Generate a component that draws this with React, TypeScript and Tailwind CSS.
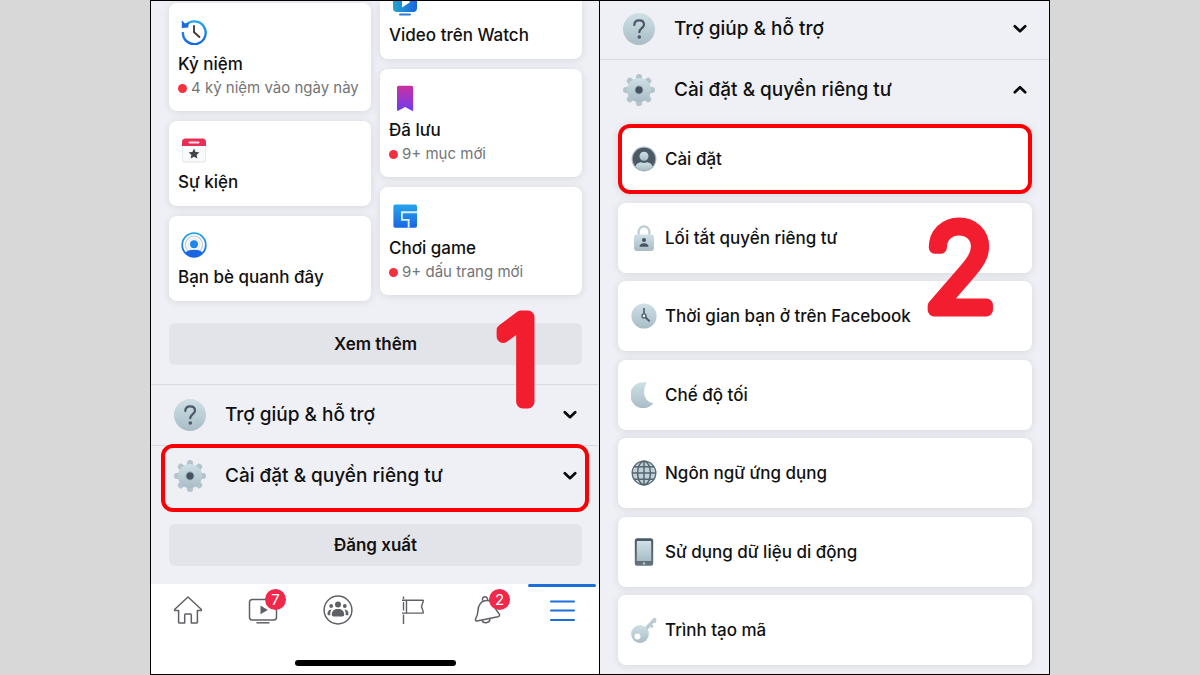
import type { ReactNode } from 'react';

type Shortcut = {
  title: string;
  note?: string;
  icon: ReactNode;
};

function Gradients() {
  return (
    <svg className="absolute h-0 w-0" aria-hidden="true">
      <defs>
        <linearGradient id="steel" x1="0" y1="0" x2="0" y2="1">
          <stop offset="0" stopColor="#cfe0e6" />
          <stop offset="1" stopColor="#a9bcc6" />
        </linearGradient>
        <linearGradient id="slate" x1="0" y1="0" x2="0" y2="1">
          <stop offset="0" stopColor="#4a5864" />
          <stop offset="1" stopColor="#66757f" />
        </linearGradient>
        <linearGradient id="sky" x1="0" y1="0" x2="0" y2="1">
          <stop offset="0" stopColor="#27a5ee" />
          <stop offset="1" stopColor="#1a66e0" />
        </linearGradient>
        <linearGradient id="saved" x1="0" y1="0" x2="0" y2="1">
          <stop offset="0" stopColor="#cb2f9e" />
          <stop offset="1" stopColor="#6e3df0" />
        </linearGradient>
        <linearGradient id="watch" x1="0" y1="0" x2="1" y2="0">
          <stop offset="0" stopColor="#22a7c9" />
          <stop offset="1" stopColor="#1b63e2" />
        </linearGradient>
      </defs>
    </svg>
  );
}

const MemoryIcon = () => (
  <svg viewBox="0 0 26 26" className="size-[26px]" fill="none" aria-hidden="true">
    <path d="M4.4 6.6A11.4 11.4 0 1 1 1.9 13" stroke="url(#sky)" strokeWidth="2.4" />
    <path d="M.8 1.2l1.4 1.5L4 4.4l3.8-.8-.6 4.8-6.4.5z" fill="#1c69de" />
    <path d="M13 7v6.2" stroke="#333" strokeWidth="1.8" strokeLinecap="round" />
    <path d="M13.4 13.4l5 4.6" stroke="#4a3b35" strokeWidth="2" strokeLinecap="round" />
  </svg>
);

const EventIcon = () => (
  <svg viewBox="0 0 26 26" className="size-[26px]" aria-hidden="true">
    <rect x="1" y="2" width="24" height="23.5" rx="3.5" fill="#dfe1e6" />
    <rect x="1.6" y="2" width="22.8" height="22.6" rx="3" fill="#f9fafc" />
    <path d="M1 9V5a3.5 3.5 0 0 1 3.5-3.5h17A3.5 3.5 0 0 1 25 5v4z" fill="#e72f55" />
    <rect x="7.5" y="4.4" width="11" height="2" rx="1" fill="#ffe3e9" />
    <path d="M13 11.4l1.6 3.5 3.8.4-2.8 2.6.8 3.7-3.4-1.9-3.4 1.9.8-3.7-2.8-2.6 3.8-.4z" fill="#414449" />
  </svg>
);

const NearbyIcon = () => (
  <svg viewBox="0 0 26 26" className="size-[26px]" fill="none" aria-hidden="true">
    <circle cx="13" cy="13" r="11.8" stroke="url(#sky)" strokeWidth="1.8" />
    <circle cx="13" cy="12.8" r="8.6" stroke="#c3cad3" strokeWidth="1.2" />
    <circle cx="13" cy="12.6" r="6" stroke="#dde1e7" />
    <circle cx="13" cy="12.2" r="4" fill="#1f86ea" />
    <path d="M4.2 20.8c2.4-2.4 5.4-3 8.8-3s6.4.6 8.8 3A11.8 11.8 0 0 1 13 24.8a11.8 11.8 0 0 1-8.8-4z" fill="#1a66e0" />
  </svg>
);

const WatchIcon = () => (
  <svg viewBox="0 0 26 26" className="size-[26px]" aria-hidden="true">
    <rect x="1" y="1" width="24" height="21" rx="4" fill="url(#watch)" />
    <path d="M10 7v10.6L18.4 12z" fill="#fff" />
    <rect x="7" y="23.6" width="12" height="2" rx="1" fill="#2b79d8" />
  </svg>
);

const SavedIcon = () => (
  <svg viewBox="0 0 26 26" className="size-[26px]" aria-hidden="true">
    <path d="M5 2.5A1.8 1.8 0 0 1 6.8.7h12.6a1.8 1.8 0 0 1 1.8 1.8v22.6a.8.8 0 0 1-1.2.7L13.1 22l-6.9 3.8a.8.8 0 0 1-1.2-.7z" fill="url(#saved)" />
  </svg>
);

const GameIcon = () => (
  <svg viewBox="0 0 26 26" className="size-[26px]" aria-hidden="true">
    <rect x="1.4" y="1.5" width="23.6" height="23.3" rx="1.8" fill="url(#sky)" />
    <path d="M9 8.3h16v1.9H10.8v5.8h6.8v8.8h-1.9v-7H9z" fill="#d9efff" />
  </svg>
);

const HelpIcon = () => (
  <svg viewBox="0 0 32 32" className="size-8 shrink-0" fill="none" aria-hidden="true">
    <circle cx="16" cy="16" r="16" fill="url(#steel)" />
    <path d="M11.3 12.1c0-3 2-4.8 4.9-4.8s4.8 1.7 4.8 4.2c0 3.5-4.7 3.7-4.7 7.7" stroke="#4b5a66" strokeWidth="2.2" strokeLinecap="round" />
    <circle cx="16.3" cy="24" r="1.8" fill="#4b5a66" />
  </svg>
);

const teeth = [0, 45, 90, 135, 180, 225, 270, 315];

const GearIcon = () => (
  <svg viewBox="0 0 32 32" className="size-8 shrink-0" aria-hidden="true">
    {teeth.map((angle) => (
      <path key={angle} d="M12.6 6l.6-4.4Q13.4 0 16 0t2.8 1.6l.6 4.4z" fill="#b4c4cc" transform={`rotate(${angle} 16 16)`} />
    ))}
    <circle cx="16" cy="16" r="12" fill="url(#steel)" />
    <circle cx="16" cy="16" r="4.4" fill="#8fa0ab" />
    <circle cx="16" cy="16" r="3.4" fill="#45535e" />
  </svg>
);

const AccountIcon = () => (
  <svg viewBox="0 0 26 26" className="size-[26px] shrink-0" aria-hidden="true">
    <circle cx="13" cy="13" r="12.5" fill="#a9bbc5" />
    <circle cx="13" cy="13" r="11.3" fill="#4b5964" />
    <circle cx="13" cy="10.2" r="4.5" fill="url(#steel)" />
    <path d="M4.4 20.4c.7-2.5 3-3.7 5.6-4.1 2 1 4 1 6 0 2.6.4 4.9 1.6 5.6 4.1A11.3 11.3 0 0 1 13 24.3a11.3 11.3 0 0 1-8.6-3.9z" fill="url(#steel)" />
  </svg>
);

const LockIcon = () => (
  <svg viewBox="0 0 26 26" className="size-[26px] shrink-0" fill="none" aria-hidden="true">
    <path d="M7.6 12V6.8a5.4 5.4 0 0 1 10.8 0V12" stroke="#bccbd2" strokeWidth="2.2" />
    <rect x="3" y="9.5" width="20" height="16.5" rx="2.4" fill="url(#steel)" />
    <circle cx="13" cy="15" r="2" fill="#46535e" />
    <path d="M8.5 21.8c0-2.4 1.8-3.6 4.5-3.6s4.5 1.2 4.5 3.6z" fill="#46535e" />
  </svg>
);

const TimeIcon = () => (
  <svg viewBox="0 0 26 26" className="size-[26px] shrink-0" fill="none" aria-hidden="true">
    <circle cx="13" cy="13" r="12.6" fill="url(#steel)" />
    <path d="M13 5v6" stroke="#4b5a66" strokeWidth="1.6" />
    <path d="M14.6 14.4l4 4" stroke="#4b5a66" strokeWidth="2" />
    <circle cx="13" cy="12.9" r="2" fill="#e6eff3" stroke="#4b5a66" strokeWidth="1.3" />
  </svg>
);

const MoonIcon = () => (
  <svg viewBox="0 0 26 26" className="size-[26px] shrink-0" aria-hidden="true">
    <path d="M14.8.4A13 13 0 1 0 22 21.8a.6.6 0 0 0-.5-.9C14 20.6 10.3 9 15.6 1.2a.5.5 0 0 0-.8-.8z" fill="url(#steel)" />
  </svg>
);

const GlobeIcon = () => (
  <svg viewBox="0 0 26 26" className="size-[26px] shrink-0" fill="none" aria-hidden="true">
    <circle cx="13" cy="13" r="12.4" fill="#bfd0d8" />
    <g stroke="#566570" strokeWidth="1.5">
      <circle cx="13" cy="13" r="11.8" strokeWidth="1.2" />
      <ellipse cx="13" cy="13" rx="6.4" ry="11.8" />
      <path d="M13 1v24M1 13h24M3 6.7h20M3 19.3h20" />
    </g>
  </svg>
);

const PhoneIcon = () => (
  <svg viewBox="0 0 20 28" className="h-7 w-[26px] shrink-0" aria-hidden="true">
    <rect x=".8" y=".2" width="18.4" height="27.6" rx="2.6" fill="url(#slate)" />
    <rect x="2.8" y="3" width="14.4" height="20" fill="url(#steel)" />
    <circle cx="10" cy="25.4" r="1.2" fill="#b9c8cf" />
  </svg>
);

const KeyIcon = () => (
  <svg viewBox="0 0 26 26" className="size-[26px] shrink-0" fill="none" aria-hidden="true">
    <path d="M12 15L23.5 2.6" stroke="#bccbd3" strokeWidth="3.6" strokeLinecap="round" />
    <path d="M18.5 7.5l3.3 2.6M22 3.6l3 1.4" stroke="#bccbd3" strokeWidth="2.8" />
    <circle cx="9" cy="17" r="8.9" fill="url(#steel)" />
    <circle cx="6.5" cy="19.4" r="3" fill="#fff" />
  </svg>
);

const HomeTabIcon = () => (
  <svg viewBox="0 0 30 30" className="size-[30px]" fill="none" stroke="#5f6166" strokeWidth="1.5" strokeLinejoin="round" aria-hidden="true">
    <path d="M15 2L1.8 14.2c-.5.6-.2 1.4.6 1.4h3.2v11.6c0 .6.3.9.9.9h5.2v-8.2c0-.5.3-.8.8-.8h5c.5 0 .8.3.8.8v8.2h5.2c.6 0 .9-.3.9-.9V15.6h3.2c.8 0 1.1-.8.6-1.4z" />
  </svg>
);

const VideoTabIcon = () => (
  <svg viewBox="0 0 30 30" className="size-[30px]" fill="none" stroke="#5f6166" strokeWidth="1.5" aria-hidden="true">
    <rect x="1.5" y="4.5" width="27" height="20.5" rx="2.8" />
    <path d="M12.5 10.5v8.8l7.3-4.4z" fill="#5f6166" stroke="none" />
    <path d="M8.5 27.8h13" />
  </svg>
);

const GroupTabIcon = () => (
  <svg viewBox="0 0 30 30" className="size-[30px]" fill="#5f6166" aria-hidden="true">
    <circle cx="15" cy="15" r="13.9" fill="none" stroke="#5f6166" strokeWidth="1.5" />
    <circle cx="15" cy="9.4" r="3" />
    <circle cx="8.2" cy="11" r="1.9" />
    <circle cx="21.8" cy="11" r="1.9" />
    <path d="M8.8 19.6c0-3.8 2.4-5.7 6.2-5.7s6.2 1.9 6.2 5.7c0 1.4-.7 1.9-2 1.9h-8.4c-1.3 0-2-.5-2-1.9z" />
    <path d="M8.6 14.6c-1 1.3-1.5 3-1.3 5.6H5.8c-.9 0-1.3-.4-1.3-1.3 0-2.6 1.5-4.3 4.1-4.3zM21.4 14.6c1 1.3 1.5 3 1.3 5.6h1.5c.9 0 1.3-.4 1.3-1.3 0-2.6-1.5-4.3-4.1-4.3z" />
  </svg>
);

const FlagTabIcon = () => (
  <svg viewBox="0 0 30 30" className="size-[30px]" fill="none" stroke="#5f6166" strokeWidth="1.4" aria-hidden="true">
    <path d="M6.5 1.5V4M6.5 7v8.5M6.5 19.5V29" />
    <path d="M5 5.2h20.6c.7 0 .9.4.7.9l-1.8 5.4 1.8 5.6c.2.6-.1 1-.7 1H5M9.5 5.2v12.9" />
  </svg>
);

const BellTabIcon = () => (
  <svg viewBox="0 0 30 30" className="size-[30px]" fill="none" stroke="#5f6166" strokeWidth="1.5" strokeLinejoin="round" aria-hidden="true">
    <path d="M5 25.9c-1.4.2-1.9-.9-1.3-2.2 1.3-2.6 2.1-4.6 2.3-8 .3-4.8 2.5-8.9 6.8-9.9 4.8-1.1 8 1.9 9.8 5.9 1.3 2.9 2.2 4.6 4.1 6.5 1.5 1.6 1 3.1-.8 3.6z" />
    <path d="M10.700 5.700c-1-2.500.8-3.900 2.300-3.900s2.900 1.300 2.700 3.500M10 25.200c.9 3.900 7.400 3.400 8.200-1" />
  </svg>
);

const MenuTabIcon = () => (
  <svg viewBox="0 0 30 30" className="size-[30px]" stroke="#1b6fdb" strokeWidth="2" strokeLinecap="round" aria-hidden="true">
    <path d="M4 6.500h23M4 15.500h23M4 25h23" />
  </svg>
);

function Chevron({ open = false }: { open?: boolean }) {
  return (
    <svg viewBox="0 0 14 10" className="h-[10px] w-[14px] shrink-0" fill="none" stroke="#0b0b0c" strokeWidth="2.7" strokeLinecap="round" strokeLinejoin="round" aria-hidden="true">
      <path d={open ? 'M1.8 7.2L7 2.2l5.2 5' : 'M1.8 2.2L7 7.2l5.2-5'} />
    </svg>
  );
}

const leftShortcuts: Shortcut[] = [
  { title: 'Kỷ niệm', note: '4 kỷ niệm vào ngày này', icon: <MemoryIcon /> },
  { title: 'Sự kiện', icon: <EventIcon /> },
  { title: 'Bạn bè quanh đây', icon: <NearbyIcon /> },
];

const rightShortcuts: Shortcut[] = [
  { title: 'Đã lưu', note: '9+ mục mới', icon: <SavedIcon /> },
  { title: 'Chơi game', note: '9+ dấu trang mới', icon: <GameIcon /> },
];

const settings = [
  { title: 'Cài đặt', icon: <AccountIcon />, marked: true },
  { title: 'Lối tắt quyền riêng tư', icon: <LockIcon /> },
  { title: 'Thời gian bạn ở trên Facebook', icon: <TimeIcon /> },
  { title: 'Chế độ tối', icon: <MoonIcon /> },
  { title: 'Ngôn ngữ ứng dụng', icon: <GlobeIcon /> },
  { title: 'Sử dụng dữ liệu di động', icon: <PhoneIcon /> },
  { title: 'Trình tạo mã', icon: <KeyIcon /> },
];

const tabs = [
  { label: 'Trang chủ', icon: <HomeTabIcon /> },
  { label: 'Video', icon: <VideoTabIcon />, badge: '7' },
  { label: 'Nhóm', icon: <GroupTabIcon /> },
  { label: 'Trang', icon: <FlagTabIcon /> },
  { label: 'Thông báo', icon: <BellTabIcon />, badge: '2' },
  { label: 'Menu', icon: <MenuTabIcon />, active: true },
];

function ShortcutCard({ title, note, icon }: Shortcut) {
  return (
    <button
      type="button"
      className={`flex flex-col items-start rounded-lg bg-white px-[9px] pt-4 text-left shadow-[0_1px_8px_rgba(0,0,0,0.1)] ${note ? 'h-[108px]' : 'h-[85px]'}`}
    >
      <span className="ml-[3px]">{icon}</span>
      <span className="mt-[7px] text-[17px] leading-6 font-medium whitespace-nowrap text-[#111]">{title}</span>
      {note && (
        <span className="flex items-center gap-1 text-[15px] leading-6 whitespace-nowrap text-[#737476]">
          <span className="size-[9px] rounded-full bg-[#f4303f]" />
          {note}
        </span>
      )}
    </button>
  );
}

function SectionRow({ title, icon, open }: { title: string; icon: ReactNode; open?: boolean }) {
  return (
    <button type="button" aria-expanded={!!open} className="flex h-[60px] w-full items-center gap-[19px] pr-[22px] pl-[23px] text-left">
      {icon}
      <span className={`flex-1 text-[19px] leading-6 whitespace-nowrap text-[#111] ${open ? 'font-medium' : 'font-[450]'}`}>{title}</span>
      <Chevron open={open} />
    </button>
  );
}

function StepNumber({ value, className }: { value: string; className: string }) {
  return (
    <svg viewBox="0 0 100 160" className={`pointer-events-none absolute h-[160px] w-[100px] ${className}`}>
      <text x="50" y="120" textAnchor="middle" fontSize="117" fill="#f21d2f" stroke="#f21d2f" strokeWidth="13" strokeLinejoin="round">
        {value}
      </text>
    </svg>
  );
}

function MenuScreen() {
  return (
    <section className="relative flex flex-col border-r border-black">
      <div className="grid grid-cols-2 items-start gap-[9px] pr-[17px] pl-[18px]">
        <div className="flex flex-col gap-[10px] pt-[2px]">
          {leftShortcuts.map((item) => (
            <ShortcutCard key={item.title} {...item} />
          ))}
        </div>
        <div className="flex flex-col gap-[10px]">
          <button
            type="button"
            className="flex h-[58px] flex-col items-start justify-end overflow-hidden rounded-b-lg bg-white px-[9px] pb-3 text-left shadow-[0_1px_8px_rgba(0,0,0,0.1)]"
          >
            <span className="ml-[3px]">
              <WatchIcon />
            </span>
            <span className="mt-[7px] text-[17px] leading-6 font-medium whitespace-nowrap text-[#111]">Video trên Watch</span>
          </button>
          {rightShortcuts.map((item) => (
            <ShortcutCard key={item.title} {...item} />
          ))}
        </div>
      </div>

      <button type="button" className="mt-[22px] mr-[17px] mb-[19px] ml-[18px] h-[42px] rounded-md bg-[#e3e4e9] pt-[2px] text-[17px] font-semibold text-[#111]">
        Xem thêm
      </button>

      <div className="border-t border-[#d8dae0]">
        <SectionRow title="Trợ giúp & hỗ trợ" icon={<HelpIcon />} />
      </div>
      <div className="relative border-t border-[#d8dae0]">
        <SectionRow title="Cài đặt & quyền riêng tư" icon={<GearIcon />} />
        <span className="pointer-events-none absolute -top-[2px] right-[10px] -bottom-[6px] left-[10px] rounded-xl border-4 border-[#f90006]" />
      </div>

      <button type="button" className="mt-[18px] mr-[17px] mb-[18px] ml-[18px] h-[42px] rounded-md bg-[#e3e4e9] pt-[2px] text-[17px] font-semibold text-[#111]">
        Đăng xuất
      </button>

      <nav className="flex flex-1 flex-col items-center bg-white pb-2">
        <div className="grid w-full grid-cols-6">
          {tabs.map((tab) => (
            <button key={tab.label} type="button" aria-label={tab.label} className="flex h-[52px] flex-col items-center">
              <span className={`h-[3px] w-[68px] rounded-full ${tab.active ? 'bg-[#1b6fdb]' : ''}`} />
              <span className="relative mt-2">
                {tab.icon}
                {tab.badge && (
                  <span className="absolute -top-[6px] -right-[8px] flex size-[21px] items-center justify-center rounded-full bg-[#f02849] text-[15px] leading-5 text-white">
                    {tab.badge}
                  </span>
                )}
              </span>
            </button>
          ))}
        </div>
        <span className="mt-auto h-[6px] w-[161px] rounded-full bg-black" />
      </nav>

      <StepNumber value="1" className="top-[281px] right-[31px] font-extralight" />
    </section>
  );
}

function SettingsScreen() {
  return (
    <section className="relative flex flex-col">
      <div className="-mt-[2px] border-b border-[#d8dae0]">
        <SectionRow title="Trợ giúp & hỗ trợ" icon={<HelpIcon />} />
      </div>
      <SectionRow title="Cài đặt & quyền riêng tư" icon={<GearIcon />} open />

      <ul className="flex flex-1 flex-col justify-between gap-2 pt-1 pr-[17px] pb-[9px] pl-[18px]">
        {settings.map((item) => (
          <li key={item.title}>
            <button
              type="button"
              className={`flex h-[70px] w-full items-center gap-2 bg-white pl-[13px] text-left text-[17px] leading-6 font-medium whitespace-nowrap text-[#111] shadow-[0_1px_8px_rgba(0,0,0,0.1)] ${
                item.marked ? 'rounded-xl inset-ring-4 inset-ring-[#f90006]' : 'rounded-lg'
              }`}
            >
              {item.icon}
              {item.title}
            </button>
          </li>
        ))}
      </ul>

      <StepNumber value="2" className="top-[189px] right-[39px] font-extralight" />
    </section>
  );
}

export default function App() {
  return (
    <main className="flex min-h-screen justify-center bg-[#d8d8d8] font-[Inter,sans-serif]">
      <Gradients />
      <div className="grid w-3/4 grid-cols-2 overflow-hidden border border-black bg-[#eff0f5]">
        <MenuScreen />
        <SettingsScreen />
      </div>
    </main>
  );
}
